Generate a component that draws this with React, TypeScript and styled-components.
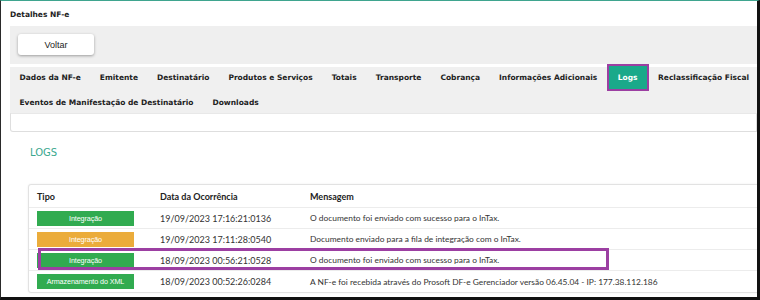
import React from "react";
import styled, { createGlobalStyle } from "styled-components";

const Global = createGlobalStyle`
  html, body { margin: 0; padding: 0; background: #fff; }
  * { box-sizing: border-box; }
`;

const Frame = styled.div`
  width: 760px;
  height: 300px;
  overflow: hidden;
  border-top: 1px solid #3fa58f;
  border-left: 1px solid #2a2a2a;
  border-right: 3px solid #111;
  border-bottom: 3px solid #111;
  background: #fff;
  font-family: "DejaVu Sans", Verdana, sans-serif;
`;

const Title = styled.div`
  height: 25px;
  padding: 1px 0 0 9px;
  display: flex;
  align-items: center;
  font-size: 7.5px;
  font-weight: bold;
  color: #222;
`;

const Panel = styled.div`
  margin-left: 9px;
`;

const Toolbar = styled.div`
  height: 38px;
  background: #efefef;
  display: flex;
  align-items: flex-start;
  padding: 8px 0 0 8px;
`;

const Button = styled.button`
  width: 76px;
  height: 21px;
  border: none;
  border-radius: 3px;
  background: #fff;
  box-shadow: 0 1px 3px rgba(0, 0, 0, 0.35);
  font-family: "Liberation Sans", Arial, sans-serif;
  font-size: 9px;
  color: #222;
  padding: 0;
`;

const TabBar = styled.div`
  background: linear-gradient(#fff 0 3px, #f0f0f0 3px);
`;

const TabRow = styled.div<{ $h: number }>`
  display: flex;
  align-items: stretch;
  height: ${(p) => p.$h}px;
`;

const Tab = styled.div<{ $active?: boolean }>`
  display: flex;
  align-items: center;
  padding: ${(p) => (p.$active ? "0 9px" : "0 9.5px")};
  font-size: 7.5px;
  font-weight: bold;
  white-space: nowrap;
  color: ${(p) => (p.$active ? "#fff" : "#222")};
  background: ${(p) => (p.$active ? "#1aa98a" : "transparent")};
  border: ${(p) => (p.$active ? "2px solid #9c3fa2" : "none")};
`;

const TabContent = styled.div`
  height: 19px;
  background: #fff;
  border: 1px solid #dedede;
  border-top: 1px solid #e8e8e8;
  border-radius: 0 0 0 3px;
`;

const Section = styled.div`
  padding: 15px 0 0 20px;
`;

const Heading = styled.div`
  font-size: 10px;
  color: #3aa88e;
  height: 12px;
  line-height: 12px;
`;

const Card = styled.div`
  margin-top: 25px;
  margin-left: -2px;
  width: 760px;
  border: 1px solid #e2e2e2;
  border-radius: 3px;
  box-shadow: 0 0 2px rgba(0, 0, 0, 0.08);
  background: #fff;
  font-family: Lato, "Open Sans", sans-serif;
  font-size: 9px;
  color: #333;
`;

const Row = styled.div<{ $head?: boolean }>`
  position: relative;
  display: grid;
  grid-template-columns: 123px 150px 1fr;
  align-items: center;
  height: ${(p) => (p.$head ? "23px" : "21px")};
  padding-left: 8px;
  border-bottom: 1px solid #ececec;
  font-weight: ${(p) => (p.$head ? "bold" : "normal")};
  color: ${(p) => (p.$head ? "#222" : "#333")};
  &:last-child { border-bottom: none; }
`;

const Message = styled.div<{ $head?: boolean }>`
  font-size: ${(p) => (p.$head ? "9px" : "8.4px")};
  white-space: nowrap;
`;

const Badge = styled.div<{ $color: string }>`
  width: 97px;
  height: 15px;
  background: ${(p) => p.$color};
  color: #fff;
  font-family: "Liberation Sans", Arial, sans-serif;
  font-size: 7.2px;
  letter-spacing: -0.1px;
  display: flex;
  align-items: center;
  justify-content: center;
`;

const Highlight = styled.div`
  position: absolute;
  left: 9px;
  top: -2px;
  width: 571px;
  height: 22px;
  border: 3px solid #9c3fa2;
  pointer-events: none;
`;

const GREEN = "#31ab50";
const ORANGE = "#ebac3b";

const rows = [
  { tipo: "Integração", color: GREEN, data: "19/09/2023 17:16:21:0136", msg: "O documento foi enviado com sucesso para o InTax." },
  { tipo: "Integração", color: ORANGE, data: "19/09/2023 17:11:28:0540", msg: "Documento enviado para a fila de integração com o InTax." },
  { tipo: "Integração", color: GREEN, data: "18/09/2023 00:56:21:0528", msg: "O documento foi enviado com sucesso para o InTax.", hl: true },
  { tipo: "Armazenamento do XML", color: GREEN, data: "18/09/2023 00:52:26:0284", msg: "A NF-e foi recebida através do Prosoft DF-e Gerenciador versão 06.45.04 - IP: 177.38.112.186" },
];

const row1 = ["Dados da NF-e", "Emitente", "Destinatário", "Produtos e Serviços", "Totais", "Transporte", "Cobrança", "Informações Adicionais"];

export default function App() {
  return (
    <>
      <Global />
      <Frame>
        <Title>Detalhes NF-e</Title>
        <Panel>
          <Toolbar>
            <Button>Voltar</Button>
          </Toolbar>
          <TabBar>
            <TabRow $h={27}>
              {row1.map((t) => (
                <Tab key={t}>{t}</Tab>
              ))}
              <Tab $active>Logs</Tab>
              <Tab>Reclassificação Fiscal</Tab>
            </TabRow>
            <TabRow $h={22}>
              <Tab>Eventos de Manifestação de Destinatário</Tab>
              <Tab>Downloads</Tab>
            </TabRow>
          </TabBar>
          <TabContent />
          <Section>
            <Heading>LOGS</Heading>
            <Card>
              <Row $head>
                <div>Tipo</div>
                <div>Data da Ocorrência</div>
                <Message $head>Mensagem</Message>
              </Row>
              {rows.map((r, i) => (
                <Row key={i}>
                  <Badge $color={r.color}>{r.tipo}</Badge>
                  <div>{r.data}</div>
                  <Message>{r.msg}</Message>
                  {r.hl && <Highlight />}
                </Row>
              ))}
            </Card>
          </Section>
        </Panel>
      </Frame>
    </>
  );
}
